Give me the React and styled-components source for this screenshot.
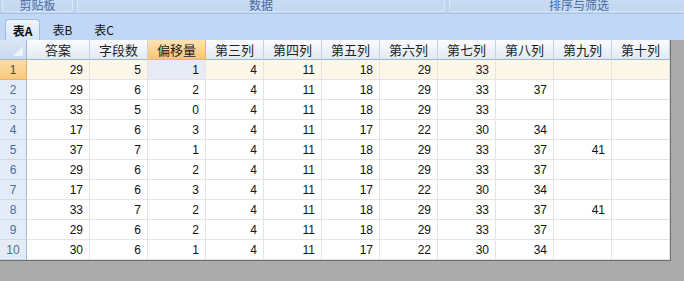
import React from "react";
import styled, { createGlobalStyle } from "styled-components";

const GlobalStyle = createGlobalStyle`
  html, body { margin: 0; padding: 0; }
  body {
    width: 684px;
    height: 281px;
    overflow: hidden;
    background: #ababab;
    font-family: "Liberation Sans", "Noto Sans CJK SC", sans-serif;
  }
`;

const Page = styled.div`
  width: 684px;
  height: 281px;
  display: flex;
  flex-direction: column;
  overflow: hidden;
  background: #ababab;
`;

const Ribbon = styled.div`
  height: 14px;
  display: flex;
  gap: 4px;
  padding: 0 0 0 2px;
  background: #bfd4ee;
  border-bottom: 1px solid #a9c3e4;
  box-sizing: border-box;
  overflow: hidden;
`;

const Group = styled.div`
  flex: none;
  width: ${(p) => p.w}px;
  height: 12px;
  overflow: hidden;
  background: linear-gradient(#c9dcf2, #c2d7f1);
  border: 1px solid #dbe7f6;
  border-top: none;
  border-radius: 0 0 3px 3px;
  box-sizing: border-box;
  color: #4a6ba3;
  font-family: "Noto Sans CJK SC", sans-serif;
  font-size: 12px;
  line-height: 13px;
  text-align: center;
`;

const GroupLabel = styled.div`
  margin-top: -2px;
`;

const TabBar = styled.div`
  height: 26px;
  display: flex;
  align-items: flex-end;
  padding-left: 5px;
  background: #c0d8f6;
  box-sizing: border-box;
`;

const Tab = styled.div`
  height: 21px;
  width: ${(p) => p.w}px;
  display: flex;
  align-items: center;
  justify-content: center;
  font-family: "Noto Sans CJK SC", sans-serif;
  font-size: 12px;
  color: #111;
  font-weight: ${(p) => (p.active ? 700 : 400)};
  box-sizing: border-box;
  ${(p) =>
    p.active &&
    `
    background: linear-gradient(#eef4fc, #d6e5f7);
    border: 1px solid #a3bde0;
    border-bottom: none;
    border-radius: 4px 4px 0 0;
  `}
`;

const Sheet = styled.div`
  display: flex;
  flex: 1;
`;

const Grid = styled.div`
  width: 671px;
  height: 221px;
  display: grid;
  grid-template-columns: 27px 63px repeat(10, 58px);
  grid-auto-rows: 20px;
  background: #fff;
  border-right: 1px solid #6d6d6d;
  border-bottom: 1px solid #6d6d6d;
  box-sizing: border-box;
  align-content: start;
`;

const Corner = styled.div`
  position: relative;
  background: linear-gradient(#dae6f5, #c8d9ee);
  border-right: 1px solid #9eb6ce;
  border-bottom: 1px solid #9eb6ce;
  box-sizing: border-box;
  &::after {
    content: "";
    position: absolute;
    right: 3px;
    bottom: 3px;
    width: 0;
    height: 0;
    border-left: 10px solid transparent;
    border-bottom: 10px solid #eef3fa;
  }
`;

const HeadCell = styled.div`
  display: flex;
  align-items: center;
  justify-content: center;
  font-family: "Noto Sans CJK SC", sans-serif;
  font-size: 13px;
  color: #222;
  background: ${(p) =>
    p.active
      ? "linear-gradient(#fbe3b4, #f7c675)"
      : "linear-gradient(#fbfcfe, #e1e9f4)"};
  border-right: 1px solid ${(p) => (p.active ? "#f0b65c" : "#c5d2e2")};
  border-bottom: 1px solid ${(p) => (p.active ? "#f0b65c" : "#9eb6ce")};
  box-sizing: border-box;
`;

const RowHead = styled.div`
  display: flex;
  align-items: center;
  justify-content: center;
  font-size: 12px;
  color: ${(p) => (p.active ? "#5c4b2a" : "#4d6c9a")};
  background: ${(p) =>
    p.active ? "linear-gradient(#fbdca6, #f7c97f)" : "#e4ecf7"};
  border-right: 1px solid ${(p) => (p.active ? "#e8b25f" : "#9eb6ce")};
  border-bottom: 1px solid ${(p) => (p.active ? "#e8b25f" : "#c9d8ea")};
  box-sizing: border-box;
`;

const Cell = styled.div`
  display: flex;
  align-items: center;
  justify-content: flex-end;
  padding-right: 6px;
  font-size: 12px;
  color: #111;
  background: ${(p) =>
    p.selected ? "#e6ebf5" : p.active ? "#fdf7ea" : "#fff"};
  border-right: 1px solid #e4e4e4;
  border-bottom: 1px solid #e4e4e4;
  box-sizing: border-box;
`;

const headers = [
  "答案",
  "字段数",
  "偏移量",
  "第三列",
  "第四列",
  "第五列",
  "第六列",
  "第七列",
  "第八列",
  "第九列",
  "第十列",
];

const rows = [
  [29, 5, 1, 4, 11, 18, 29, 33, "", "", ""],
  [29, 6, 2, 4, 11, 18, 29, 33, 37, "", ""],
  [33, 5, 0, 4, 11, 18, 29, 33, "", "", ""],
  [17, 6, 3, 4, 11, 17, 22, 30, 34, "", ""],
  [37, 7, 1, 4, 11, 18, 29, 33, 37, 41, ""],
  [29, 6, 2, 4, 11, 18, 29, 33, 37, "", ""],
  [17, 6, 3, 4, 11, 17, 22, 30, 34, "", ""],
  [33, 7, 2, 4, 11, 18, 29, 33, 37, 41, ""],
  [29, 6, 2, 4, 11, 18, 29, 33, 37, "", ""],
  [30, 6, 1, 4, 11, 17, 22, 30, 34, "", ""],
];

const App = () => {
  return (
    <>
      <GlobalStyle />
      <Page>
        <Ribbon>
          <Group w={71}>
            <GroupLabel>剪贴板</GroupLabel>
          </Group>
          <Group w={368}>
            <GroupLabel>数据</GroupLabel>
          </Group>
          <Group w={260}>
            <GroupLabel>排序与筛选</GroupLabel>
          </Group>
        </Ribbon>
        <TabBar>
          <Tab w={35} active>
            表A
          </Tab>
          <Tab w={45}>表B</Tab>
          <Tab w={38}>表C</Tab>
        </TabBar>
        <Sheet>
          <Grid>
            <Corner />
            {headers.map((h, i) => (
              <HeadCell key={h} active={i === 2}>
                {h}
              </HeadCell>
            ))}
            {rows.map((r, ri) => (
              <React.Fragment key={ri}>
                <RowHead active={ri === 0}>{ri + 1}</RowHead>
                {r.map((v, ci) => (
                  <Cell key={ci} active={ri === 0} selected={ri === 0 && ci === 2}>
                    {v}
                  </Cell>
                ))}
              </React.Fragment>
            ))}
          </Grid>
        </Sheet>
      </Page>
    </>
  );
};

export default App;
